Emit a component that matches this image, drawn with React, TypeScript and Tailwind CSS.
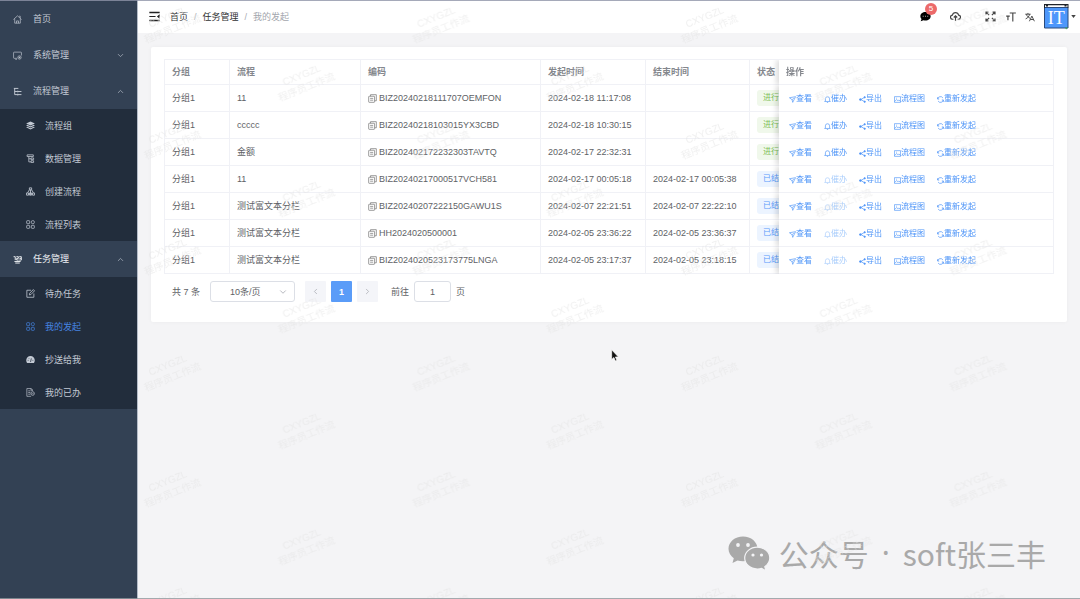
import React from "react";
import { ChevronDown, ChevronLeft, ChevronRight, ChevronUp } from "lucide-react";

type IconProps = { className?: string };

const stroke = {
  fill: "none",
  stroke: "currentColor",
  strokeWidth: 1.2,
  viewBox: "0 0 16 16",
  "aria-hidden": true,
} as const;

const HomeIcon = ({ className }: IconProps) => (
  <svg {...stroke} className={className}>
    <path d="M.800 8 8 1.500 15.200 8M3 6.500V14.500h10V6.500M6.200 14.500v-4h3.600v4M11 2h1.800v3.500" />
  </svg>
);

const SystemIcon = ({ className }: IconProps) => (
  <svg {...stroke} className={className}>
    <path d="M7 13H2A1 1 0 0 1 1 12V3a1 1 0 0 1 1-1h12a1 1 0 0 1 1 1V8M4 14.800h3" />
    <circle cx="11.500" cy="11.500" r="3" />
    <circle cx="11.500" cy="11.500" r="1" fill="currentColor" />
  </svg>
);

const TreeIcon = ({ className }: IconProps) => (
  <svg {...stroke} strokeWidth={1.700} className={className}>
    <path d="M1.500 2.500h8M3 2.500v11M3 8H8M3 13.500H8M8 8h7M8 13.500h7M8.500 6.500v3M8.500 12v3" />
  </svg>
);

const LayersIcon = ({ className }: IconProps) => (
  <svg viewBox="0 0 16 16" fill="currentColor" aria-hidden="true" className={className}>
    <path d="M8 1 15.800 4.500 8 8.200.200 4.500z" />
    <path d="M2.300 6.800.200 8 8 11.600l7.800-3.600-2.100-1.200L8 9.500z" />
    <path d="M2.300 10.200.200 11.300 8 15l7.800-3.700-2.100-1.100L8 12.900z" />
  </svg>
);

const DataIcon = ({ className }: IconProps) => (
  <svg {...stroke} strokeWidth={1.400} className={className}>
    <path d="M2 1.500h11v3H2zM5 4.500V14h4M5 8.500h4M9 7h4.500v3H9zM9 12h4.500v3H9z" />
  </svg>
);

const CreateIcon = ({ className }: IconProps) => (
  <svg {...stroke} strokeWidth={1.500} className={className}>
    <path d="M6 1.500h4V5H6zM8 5v9M3 10 6 5M13 10l-3-5M1 10.500h3.500v4H1zM11.500 10.500H15v4h-3.500zM6.300 10.500h3.400v4H6.300z" />
  </svg>
);

const GridIcon = ({ className }: IconProps) => (
  <svg {...stroke} strokeWidth={1.300} className={className}>
    <rect x="1.200" y="1.200" width="5.300" height="5.300" rx="1" />
    <rect x="9.500" y="1.200" width="5.300" height="5.300" rx="2" />
    <rect x="1.200" y="9.500" width="5.300" height="5.300" rx="1" />
    <rect x="9.500" y="9.500" width="5.300" height="5.300" rx="1" />
  </svg>
);

const TaskIcon = ({ className }: IconProps) => (
  <svg {...stroke} strokeWidth={1.700} className={className}>
    <path d="M1 3h3v6M6 3h3.500v3H6.500v3h3.500M11 3h3.800v6H11M11.500 6h3M2.500 11.500h11M4 14.300h8" />
  </svg>
);

const EditIcon = ({ className }: IconProps) => (
  <svg {...stroke} strokeWidth={1.400} className={className}>
    <path d="M9 2.200H1.500v12.500H14V8M6 10.500l.5-3L13 1l2.200 2.200L8.800 9.800z" />
  </svg>
);

const GaugeIcon = ({ className }: IconProps) => (
  <svg viewBox="0 0 16 16" aria-hidden="true" className={className}>
    <path fill="currentColor" d="M8 1.800A7.600 7.600 0 0 0 .400 9.400c0 1.800.500 3.400 1.500 4.600h12.200c1-1.200 1.500-2.800 1.500-4.600A7.600 7.600 0 0 0 8 1.800z" />
    <path stroke="#222d3c" strokeWidth="1.300" d="M8 12.500 9.500 6M3 9.500h1.500M11.500 9.500H13M4.500 5.500l1 1" />
  </svg>
);

const DoneIcon = ({ className }: IconProps) => (
  <svg {...stroke} className={className}>
    <path d="M11.500 5V3.300L9.300 1H1.500v13.800H9M4 5h4M4 8h3.500M4 11h3.500M9 1v3h2.500" />
    <circle cx="11.800" cy="9.800" r="3.200" />
    <path d="m10.300 9.800 1.100 1.100 1.800-2" />
  </svg>
);

const CopyIcon = ({ className }: IconProps) => (
  <svg {...stroke} strokeWidth={1.300} className={className}>
    <path d="M4.500 4V1.200h10.300V12H12" />
    <rect x="1.200" y="4" width="10.500" height="10.800" rx="1" />
    <path d="M3.800 7.800h5.400M3.800 11h5.400" />
  </svg>
);

const SendIcon = ({ className }: IconProps) => (
  <svg {...stroke} strokeWidth={1.500} className={className}>
    <path d="M1 4 15 1.500 8.500 14.500 7 8.500zM7 8.500l4-3.500" />
  </svg>
);

const BellIcon = ({ className }: IconProps) => (
  <svg {...stroke} strokeWidth={1.500} className={className}>
    <path d="M3.200 12V6.500a4.800 4.800 0 0 1 9.600 0V12M.800 12.500h14.400M6.500 15h3" />
  </svg>
);

const ShareIcon = ({ className }: IconProps) => (
  <svg {...stroke} strokeWidth={1.600} className={className}>
    <path d="m13 3-9 5 9 5" />
    <circle cx="13" cy="3" r="1.600" fill="currentColor" />
    <circle cx="3" cy="8" r="2" fill="currentColor" />
    <circle cx="13" cy="13" r="1.600" fill="currentColor" />
  </svg>
);

const PictureIcon = ({ className }: IconProps) => (
  <svg {...stroke} strokeWidth={1.500} className={className}>
    <path d="M1 1.500h14v13H1zM1.500 12.500 6 8l3 3 2-2 4 3.500M4.500 5h2" />
  </svg>
);

const RefreshIcon = ({ className }: IconProps) => (
  <svg {...stroke} strokeWidth={1.600} className={className}>
    <path d="M14.500 9a6.500 6.500 0 0 1-12 2.500M1.500 7a6.500 6.500 0 0 1 12-2.500M1.500 2.500V7h3.500M14.500 13.500V9H11" />
  </svg>
);

const FoldIcon = ({ className }: IconProps) => (
  <svg viewBox="0 0 16 16" fill="currentColor" aria-hidden="true" className={className}>
    <path d="M.500 1.200h15v1.900H.500zM.500 7.100H9.500v1.800H.500zM.500 12.900h15v1.900H.500zM15.500 4.800v6.400L11.500 8z" />
  </svg>
);

const MessageIcon = ({ className }: IconProps) => (
  <svg viewBox="0 0 16 16" aria-hidden="true" className={className}>
    <path fill="#000" d="M8 1.500c4.300 0 7.500 2.700 7.500 6.200s-3.200 6.200-7.500 6.200c-1 0-2-.200-2.900-.500L1 15l1.200-3.200A5.700 5.700 0 0 1 .500 7.700C.500 4.200 3.700 1.500 8 1.500z" />
    <path fill="#bbb" d="M4 7h1.300v1.300H4zM7.300 7h1.300v1.300H7.300zM10.600 7h1.300v1.300h-1.300z" />
  </svg>
);

const CloudIcon = ({ className }: IconProps) => (
  <svg {...stroke} strokeWidth={1.700} className={className}>
    <path d="M5 12H4a3 3 0 0 1-.500-6 4.600 4.600 0 0 1 9 0 3 3 0 0 1-.500 6h-1M8 7v7.500M5.500 9.500 8 7l2.500 2.500" />
  </svg>
);

const FullscreenIcon = ({ className }: IconProps) => (
  <svg {...stroke} strokeWidth={1.800} className={className}>
    <path d="M1.500 5V1.500H5M11 1.500h3.500V5M14.500 11v3.500H11M5 14.500H1.500V11M2 2l4 4M14 2l-4 4M14 14l-4-4M2 14l4-4" />
  </svg>
);

const FontSizeIcon = ({ className }: IconProps) => (
  <svg {...stroke} strokeWidth={1.800} className={className}>
    <path d="M6 1.500h9.800M10.900 1.500V15M.300 6.500H6M3.100 6.500V13" />
  </svg>
);

const LanguageIcon = ({ className }: IconProps) => (
  <svg {...stroke} strokeWidth={1.500} className={className}>
    <path d="M.500 3.500h8.500M4.700 1.500v2M2 3.500c1 3 3 5 6 6.500M7.500 3.500c-1 3.500-3 6-6.500 7.500M7 14.800l4-8.300 4 8.300M8.500 12h5" />
  </svg>
);

const AvatarIcon = ({ className }: IconProps) => (
  <svg viewBox="0 0 25 26" aria-label="IT" role="img" className={className}>
    <path fill="#fff" d="M0 0h25v4H0z" />
    <path fill="#4d97fb" stroke="#2a4a7c" strokeWidth="1" d="M.500 3.500h23.500v20.500H.500z" />
    <path fill="#1f2329" d="M0 0h24.500v1.200H0zM0 0h1v4H0zM23.500 0h1v4h-1z" />
    <path fill="#1f2329" d="M2 1h2v1.500H2zM20.500 1h2v1.500h-2z" />
    <path fill="#3fa34d" d="M21 23.500h2.500L22.200 25.500z" />
    <text x="12.300" y="19.500" textAnchor="middle" fill="#fff" fontSize="18" fontFamily="'Liberation Serif', serif">IT</text>
  </svg>
);

const WechatIcon = ({ className }: IconProps) => (
  <svg viewBox="0 0 42 35" aria-hidden="true" className={className}>
    <path fill="#a9a9a9" d="M15 .500C6.800.500.500 6 .500 12.800c0 3.800 2 7.200 5.300 9.500L4.500 27l5-2.600c1.700.500 3.500.800 5.500.800 8.200 0 14.500-5.600 14.500-12.400S23.200.500 15 .500z" />
    <path fill="#a9a9a9" stroke="#f4f4f6" strokeWidth="1.200" d="M29.300 11.200c-7 0-12.600 4.900-12.600 10.900s5.600 10.900 12.600 10.900c1.500 0 3-.200 4.300-.600l4.400 2.300-1.200-4c3-2 5-5.100 5-8.600 0-6-5.500-10.900-12.500-10.900z" />
    <g fill="#f4f4f6">
      <circle cx="10" cy="9" r="1.900" />
      <circle cx="20" cy="9" r="1.900" />
      <circle cx="25" cy="19" r="1.600" />
      <circle cx="33.500" cy="19" r="1.600" />
    </g>
  </svg>
);

const CursorIcon = ({ className }: IconProps) => (
  <svg viewBox="0 0 12 19" aria-hidden="true" className={className}>
    <path fill="#111" stroke="#fff" strokeWidth="1" d="M1 1v14.500l3.300-3 2.300 5.300 2.300-1-2.300-5.100h4.500z" />
  </svg>
);

type MenuChild = { label: string; icon: React.FC<IconProps>; active?: boolean };
type MenuEntry = { label: string; icon: React.FC<IconProps>; children?: MenuChild[]; collapsed?: boolean; bright?: boolean };

const menu: MenuEntry[] = [
  { label: "首页", icon: HomeIcon },
  { label: "系统管理", icon: SystemIcon, collapsed: true },
  {
    label: "流程管理",
    icon: TreeIcon,
    children: [
      { label: "流程组", icon: LayersIcon },
      { label: "数据管理", icon: DataIcon },
      { label: "创建流程", icon: CreateIcon },
      { label: "流程列表", icon: GridIcon },
    ],
  },
  {
    label: "任务管理",
    icon: TaskIcon,
    bright: true,
    children: [
      { label: "待办任务", icon: EditIcon },
      { label: "我的发起", icon: GridIcon, active: true },
      { label: "抄送给我", icon: GaugeIcon },
      { label: "我的已办", icon: DoneIcon },
    ],
  },
];

const rows = [
  { flow: "11", code: "BIZ20240218111707OEMFON", start: "2024-02-18 11:17:08", end: "" },
  { flow: "ccccc", code: "BIZ20240218103015YX3CBD", start: "2024-02-18 10:30:15", end: "" },
  { flow: "金额", code: "BIZ202402172232303TAVTQ", start: "2024-02-17 22:32:31", end: "" },
  { flow: "11", code: "BIZ20240217000517VCH581", start: "2024-02-17 00:05:18", end: "2024-02-17 00:05:38" },
  { flow: "测试富文本分栏", code: "BIZ20240207222150GAWU1S", start: "2024-02-07 22:21:51", end: "2024-02-07 22:22:10" },
  { flow: "测试富文本分栏", code: "HH2024020500001", start: "2024-02-05 23:36:22", end: "2024-02-05 23:36:37" },
  { flow: "测试富文本分栏", code: "BIZ2024020523173775LNGA", start: "2024-02-05 23:17:37", end: "2024-02-05 23:18:15" },
];

const actions = [
  { label: "查看", icon: SendIcon },
  { label: "催办", icon: BellIcon },
  { label: "导出", icon: ShareIcon },
  { label: "流程图", icon: PictureIcon },
  { label: "重新发起", icon: RefreshIcon },
];

function Sidebar() {
  return (
    <nav aria-label="主菜单" className="w-[138px] shrink-0 border-r border-[#b4bcc8] bg-[#334154] pt-px text-[#c3cad4]">
      <ul>
        {menu.map(({ label, icon: Icon, children, collapsed, bright }) => (
          <li key={label}>
            <button
              type="button"
              aria-expanded={children ? true : collapsed ? false : undefined}
              className={`flex h-9 w-full items-center gap-[11px] pr-3 pl-[13px] text-left ${bright ? "text-[#eef1f5]" : ""}`}
            >
              <Icon className="size-[9px]" />
              <span className="flex-1">{label}</span>
              {children && <ChevronUp className="size-[9px] text-[#a9b2be]" />}
              {collapsed && <ChevronDown className="size-[9px] text-[#a9b2be]" />}
            </button>
            {children && (
              <ul className="bg-[#222d3c]">
                {children.map(({ label: childLabel, icon: ChildIcon, active }) => (
                  <li key={childLabel}>
                    <a href="#" className={`flex h-[33px] items-center gap-[10px] pl-[26px] ${active ? "text-[#4684e0]" : ""}`}>
                      <ChildIcon className="size-[9px]" />
                      {childLabel}
                    </a>
                  </li>
                ))}
              </ul>
            )}
          </li>
        ))}
      </ul>
    </nav>
  );
}

function Header() {
  return (
    <header className="flex h-[33px] items-center justify-between bg-white pr-1 pl-[11px]">
      <div className="flex items-center gap-[10px]">
        <button type="button" aria-label="折叠菜单">
          <FoldIcon className="size-[11px] text-[#222]" />
        </button>
        <ol aria-label="面包屑" className="flex items-center gap-[6px] text-[#303133]">
          <li><a href="#">首页</a></li>
          <li className="text-[#a8abb2]">/</li>
          <li><a href="#">任务管理</a></li>
          <li className="text-[#a8abb2]">/</li>
          <li className="text-[#a3a6ad]">我的发起</li>
        </ol>
      </div>
      <div className="flex items-center text-[#444]">
        <button type="button" aria-label="消息" className="relative mr-[19px]">
          <MessageIcon className="size-[11px]" />
          <span className="absolute -top-2 left-[5px] flex size-3 items-center justify-center rounded-full bg-[#ec6a6a] text-[8px] text-white">5</span>
        </button>
        <button type="button" aria-label="上传" className="mr-[24px]"><CloudIcon className="size-[11px]" /></button>
        <button type="button" aria-label="全屏" className="mr-[10px]"><FullscreenIcon className="size-[11px]" /></button>
        <button type="button" aria-label="字号" className="mr-[9px]"><FontSizeIcon className="size-[10px]" /></button>
        <button type="button" aria-label="语言" className="mr-[9px]"><LanguageIcon className="size-[10px]" /></button>
        <button type="button" aria-label="用户菜单" className="flex items-center gap-[2px]">
          <AvatarIcon className="h-[26px] w-[25px]" />
          <svg viewBox="0 0 6 4" aria-hidden="true" className="h-[3px] w-[5px]"><path fill="#444" d="M0 0h6L3 4z" /></svg>
        </button>
      </div>
    </header>
  );
}

const cell = "border-r border-b border-[#f0f1f6] px-[7px] text-left whitespace-nowrap";
const stickyCell = "sticky right-0 border-r border-b border-[#f0f1f6] bg-white px-[7px] text-left shadow-[-3px_0_5px_rgba(0,0,0,0.13)] [clip-path:inset(0_0_0_-10px)]";

function FlowTable() {
  return (
    <div className="overflow-x-auto border-t border-l border-[#f0f1f6] [scrollbar-width:none]">
      <table className="w-full min-w-[964px] table-fixed border-separate border-spacing-0">
        <colgroup>
          <col className="w-[65px]" />
          <col className="w-[131px]" />
          <col className="w-[180px]" />
          <col className="w-[105px]" />
          <col className="w-[104px]" />
          <col className="w-[104px]" />
          <col className="w-[275px]" />
        </colgroup>
        <thead>
          <tr className="h-[25px] text-[#84878d]">
            <th className={cell}>分组</th>
            <th className={cell}>流程</th>
            <th className={cell}>编码</th>
            <th className={cell}>发起时间</th>
            <th className={cell}>结束时间</th>
            <th className={cell}>状态</th>
            <th className={stickyCell}>操作</th>
          </tr>
        </thead>
        <tbody>
          {rows.map((row) => (
            <tr key={row.code} className="h-[27px]">
              <td className={cell}>分组1</td>
              <td className={cell}>{row.flow}</td>
              <td className={cell}>
                <span className="flex items-center gap-[2px]">
                  <button type="button" aria-label="复制编码"><CopyIcon className="size-[9px] text-[#777]" /></button>
                  {row.code}
                </span>
              </td>
              <td className={cell}>{row.start}</td>
              <td className={cell}>{row.end}</td>
              <td className={cell}>
                <span className={`inline-flex h-4 items-center rounded-[3px] px-[6px] align-middle text-[8px] ${row.end ? "bg-[#ecf4ff] text-[#5b9bfa]" : "bg-[#f0f8eb] text-[#7fbf5a]"}`}>
                  {row.end ? "已结束" : "进行中"}
                </span>
              </td>
              <td className={stickyCell}>
                <span className="flex items-center gap-3 pt-[2px] pl-[3px] text-[8px] text-[#4d94f8]">
                  {actions.map(({ label, icon: Icon }) => {
                    const disabled = label === "催办" && row.end !== "";
                    return (
                      <button key={label} type="button" disabled={disabled} className="flex items-center disabled:text-[#a9cdfc]">
                        <Icon className="size-[7px]" />
                        {label}
                      </button>
                    );
                  })}
                </span>
              </td>
            </tr>
          ))}
        </tbody>
      </table>
    </div>
  );
}

function Pagination() {
  return (
    <div className="mt-[7px] flex items-center pl-2">
      <span className="mr-[10px]">共 7 条</span>
      <span className="relative mr-[10px] flex items-center">
        <select aria-label="每页条数" className="h-[21px] w-[85px] appearance-none rounded-[3px] border border-[#dcdfe6] bg-white pl-[19px]">
          <option>10条/页</option>
        </select>
        <ChevronDown className="pointer-events-none absolute right-[7px] size-[10px] text-[#a8abb2]" />
      </span>
      <span className="mr-[13px] flex gap-[5px]">
        <button type="button" aria-label="上一页" className="flex size-[21px] items-center justify-center rounded-[1px] bg-[#f4f5f9] text-[#a8abb2]">
          <ChevronLeft className="size-[9px]" />
        </button>
        <button type="button" aria-current="page" className="size-[21px] rounded-[1px] bg-[#5a9cf8] font-bold text-white">1</button>
        <button type="button" aria-label="下一页" className="flex size-[21px] items-center justify-center rounded-[1px] bg-[#f4f5f9] text-[#a8abb2]">
          <ChevronRight className="size-[9px]" />
        </button>
      </span>
      <label className="flex items-center gap-[5px]">
        前往
        <input type="text" defaultValue="1" className="h-[21px] w-[37px] rounded-[3px] border border-[#dcdfe6] bg-white text-center" />
        页
      </label>
    </div>
  );
}

function Watermark() {
  return (
    <svg aria-hidden="true" className="pointer-events-none absolute inset-0 z-20 size-full">
      <defs>
        <g id="mark" transform="rotate(-22)" fill="#e4e4e4" fillOpacity="0.55" textAnchor="middle" fontSize="10" fontFamily="'Liberation Sans', 'Noto Sans CJK SC', sans-serif">
          <text x="0" y="-3">CXYGZL</text>
          <text x="0" y="10">程序员工作流</text>
        </g>
        <pattern id="marks" width="268.500" height="116" patternUnits="userSpaceOnUse">
          <use href="#mark" x="32" y="23" />
          <use href="#mark" x="166" y="81" />
        </pattern>
      </defs>
      <rect width="100%" height="100%" fill="url(#marks)" />
    </svg>
  );
}

export default function App() {
  return (
    <div className="relative flex min-h-screen bg-[#f4f4f6] font-['Liberation_Sans','Noto_Sans_CJK_SC',sans-serif] text-[9px] leading-[14px] text-[#606266]">
      <Sidebar />
      <div className="relative min-w-0 flex-1 overflow-hidden">
        <Header />
        <main className="px-[13px] pt-[14px]">
          <section className="rounded-[2px] bg-white px-[13px] pt-3 pb-[20px] shadow-[0_0_4px_rgba(0,0,0,0.04)]">
            <FlowTable />
            <Pagination />
          </section>
        </main>
        <Watermark />
      </div>
      <div className="pointer-events-none absolute inset-x-0 top-0 z-30 h-px bg-[#8f94a8]/80" />
      <div className="pointer-events-none absolute inset-x-0 bottom-0 z-30 h-px bg-[#8f979c]/80" />
      <CursorIcon className="pointer-events-none absolute top-[349px] left-[611px] z-30 h-[13px] w-2" />
      <div className="absolute right-[34px] bottom-[25px] z-10 flex items-center gap-[9px] font-['Noto_Sans_CJK_SC',sans-serif] text-[30px] leading-[42px] text-[#a9a9a9]">
        <WechatIcon className="h-[35px] w-[42px]" />
        <span className="flex gap-[13px]">
          <span>公众号</span>
          <span className="font-['Noto_Sans',sans-serif]">·</span>
          <span>soft张三丰</span>
        </span>
      </div>
    </div>
  );
}
